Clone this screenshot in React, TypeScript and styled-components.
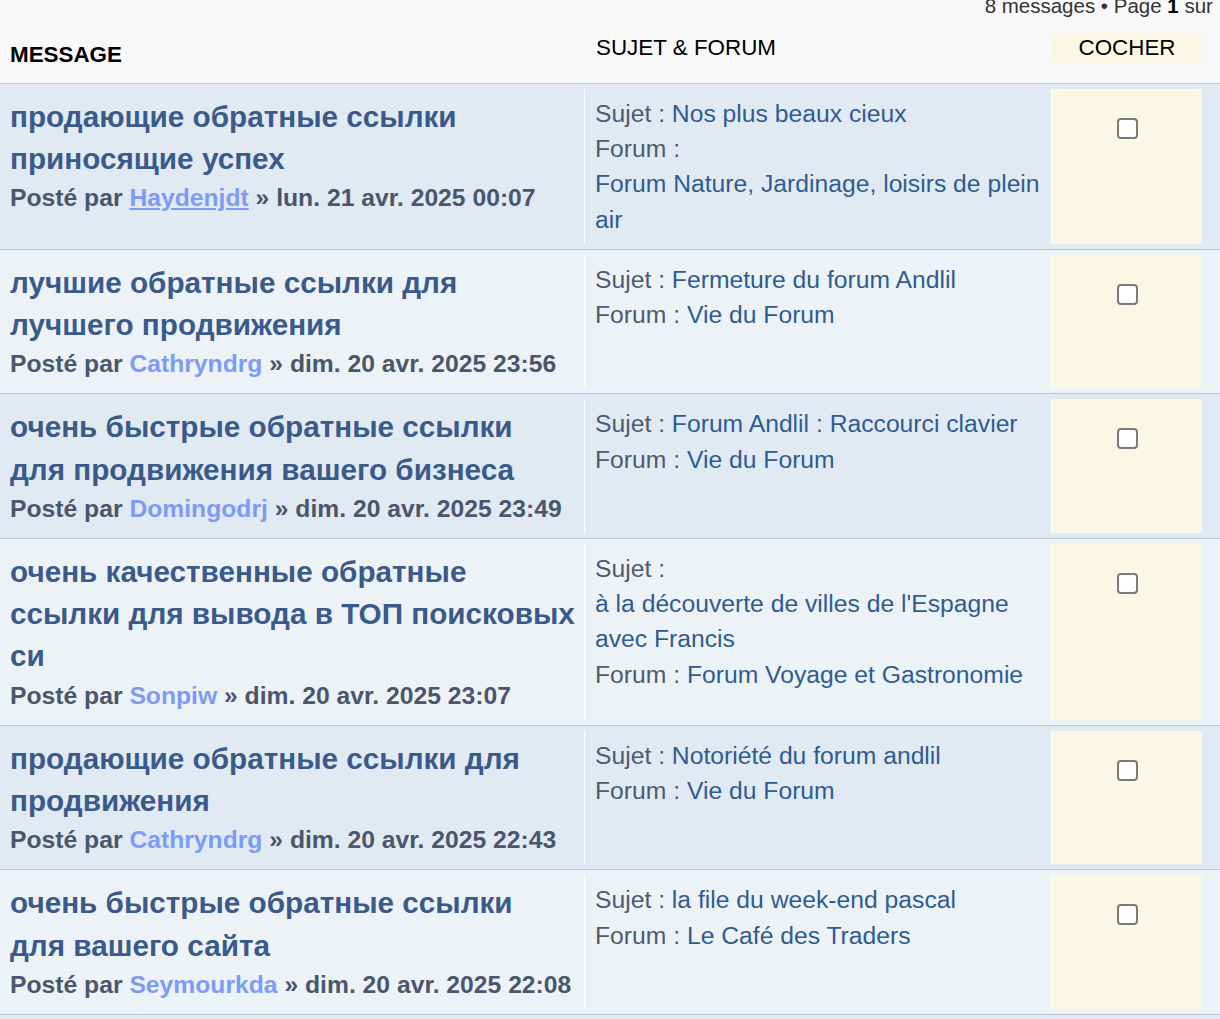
import React from "react";
import styled, { createGlobalStyle } from "styled-components";

const GlobalStyle = createGlobalStyle`
  html, body {
    margin: 0;
    padding: 0;
    background: #f8f8f8;
    overflow: hidden;
  }
  body {
    font-family: "Liberation Sans", Arial, Helvetica, sans-serif;
  }
`;

const Page = styled.div`
  width: 1240px;
  background: #f8f8f8;
`;

const Pagination = styled.div`
  margin-top: -6px;
  height: 26px;
  padding-right: 7px;
  text-align: right;
  font-size: 20.5px;
  line-height: 24px;
  color: #333333;
  b {
    font-weight: bold;
    color: #000;
  }
`;

const LastPage = styled.b`
  margin-left: 3px;
`;

const COLS = "584px 467px 151px 1fr";

const HeaderRow = styled.div`
  display: grid;
  grid-template-columns: ${COLS};
  align-items: end;
  height: 63px;
  border-bottom: 1px solid #c8c8c8;
  color: #000;
  font-size: 22.4px;
`;

const HeadCell = styled.div<{ $bold?: boolean; $pl: number; $pb: number }>`
  font-weight: ${(p) => (p.$bold ? "bold" : "normal")};
  line-height: 32px;
  padding-left: ${(p) => p.$pl}px;
  padding-bottom: ${(p) => p.$pb}px;
`;

const HeadMark = styled.div`
  margin-left: 1px;
  margin-bottom: 20px;
  height: 29px;
  line-height: 28px;
  text-align: center;
  background: #faf8e4;
`;

const Row = styled.div<{ $alt: boolean }>`
  display: grid;
  grid-template-columns: ${COLS};
  padding: 5px 0;
  background: ${(p) => (p.$alt ? "#edf2f7" : "#e1eaf2")};
  border-bottom: 1px solid #bec8d2;
  font-size: 24.7px;
  line-height: 35.2px;
`;

const MessageCell = styled.div`
  padding: 7px 5px 7px 10px;
`;

const Title = styled.div`
  font-size: 29.7px;
  line-height: 42.2px;
  font-weight: bold;
  color: #3a5a8a;
`;

const Posted = styled.div`
  font-weight: bold;
  color: #4a566b;
`;

const Author = styled.span<{ $hover?: boolean }>`
  color: #7c9bf6;
  text-decoration: ${(p) => (p.$hover ? "underline" : "none")};
`;

const SubjectCell = styled.div`
  border-left: 1px solid #ffffff;
  padding: 7px 5px 7px 10px;
  color: #4c5b72;
`;

const Line = styled.div``;

const TopicLink = styled.span`
  display: inline-block;
  color: #2e5c91;
`;

const MarkCell = styled.div`
  border-left: 1px solid #ffffff;
  background: #faf8e4;
  display: flex;
  justify-content: center;
  align-items: flex-start;
  padding-top: 29px;
`;

const Check = styled.input`
  appearance: none;
  -webkit-appearance: none;
  margin: 0;
  width: 21px;
  height: 21px;
  box-sizing: border-box;
  border: 2px solid #7a7a7a;
  border-radius: 4px;
  background: #ffffff;
`;

type Post = {
  title: string[];
  author: string;
  hover?: boolean;
  date: string;
  topic: string;
  forum: string;
};

const posts: Post[] = [
  {
    title: ["продающие обратные ссылки", "приносящие успех"],
    author: "Haydenjdt",
    hover: true,
    date: "lun. 21 avr. 2025 00:07",
    topic: "Nos plus beaux cieux",
    forum: "Forum Nature, Jardinage, loisirs de plein air",
  },
  {
    title: ["лучшие обратные ссылки для", "лучшего продвижения"],
    author: "Cathryndrg",
    date: "dim. 20 avr. 2025 23:56",
    topic: "Fermeture du forum Andlil",
    forum: "Vie du Forum",
  },
  {
    title: ["очень быстрые обратные ссылки", "для продвижения вашего бизнеса"],
    author: "Domingodrj",
    date: "dim. 20 avr. 2025 23:49",
    topic: "Forum Andlil : Raccourci clavier",
    forum: "Vie du Forum",
  },
  {
    title: ["очень качественные обратные", "ссылки для вывода в ТОП поисковых", "си"],
    author: "Sonpiw",
    date: "dim. 20 avr. 2025 23:07",
    topic: "à la découverte de villes de l'Espagne avec Francis",
    forum: "Forum Voyage et Gastronomie",
  },
  {
    title: ["продающие обратные ссылки для", "продвижения"],
    author: "Cathryndrg",
    date: "dim. 20 avr. 2025 22:43",
    topic: "Notoriété du forum andlil",
    forum: "Vie du Forum",
  },
  {
    title: ["очень быстрые обратные ссылки", "для вашего сайта"],
    author: "Seymourkda",
    date: "dim. 20 avr. 2025 22:08",
    topic: "la file du week-end pascal",
    forum: "Le Café des Traders",
  },
  {
    title: ["обратные ссылки для сайта"],
    author: "Haydenjdt",
    date: "dim. 20 avr. 2025 21:40",
    topic: "Vie du Forum",
    forum: "Vie du Forum",
  },
];

export default function App() {
  return (
    <>
      <GlobalStyle />
      <Page>
        <Pagination>
          8 messages • Page <b>1</b> sur <LastPage>1</LastPage>
        </Pagination>
        <HeaderRow>
          <HeadCell $bold $pl={10} $pb={12}>
            MESSAGE
          </HeadCell>
          <HeadCell $pl={12} $pb={19}>
            SUJET &amp; FORUM
          </HeadCell>
          <HeadMark>COCHER</HeadMark>
        </HeaderRow>
        {posts.map((p, i) => (
          <Row key={i} $alt={i % 2 === 1}>
            <MessageCell>
              <Title>
                {p.title.map((t, j) => (
                  <React.Fragment key={j}>
                    {j > 0 && <br />}
                    {t}
                  </React.Fragment>
                ))}
              </Title>
              <Posted>
                Posté par <Author $hover={p.hover}>{p.author}</Author> » {p.date}
              </Posted>
            </MessageCell>
            <SubjectCell>
              <Line>
                Sujet : <TopicLink>{p.topic}</TopicLink>
              </Line>
              <Line>
                Forum : <TopicLink>{p.forum}</TopicLink>
              </Line>
            </SubjectCell>
            <MarkCell>
              <Check type="checkbox" aria-label="cocher" />
            </MarkCell>
            <div />
          </Row>
        ))}
      </Page>
    </>
  );
}
